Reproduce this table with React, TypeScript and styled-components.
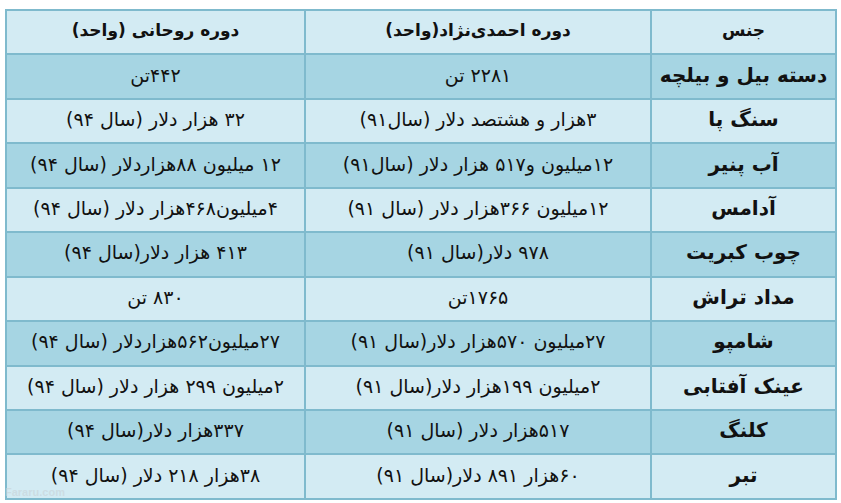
import * as React from 'react'
import styled, { createGlobalStyle } from 'styled-components'

const GlobalStyle = createGlobalStyle`
  html, body {
    margin: 0;
    padding: 0;
    background: #ffffff;
  }
`

interface Row {
  name: string
  ahmadi: string
  rouhani: string
}

const rows: Row[] = [
  { name: 'دسته بیل و بیلچه', ahmadi: '۲۲۸۱ تن', rouhani: '۴۴۲تن' },
  { name: 'سنگ پا', ahmadi: '۳هزار و هشتصد دلار (سال۹۱)', rouhani: '۳۲ هزار دلار (سال ۹۴)' },
  { name: 'آب پنیر', ahmadi: '۱۲میلیون و۵۱۷ هزار دلار (سال۹۱)', rouhani: '۱۲ میلیون ۸۸هزاردلار (سال ۹۴)' },
  { name: 'آدامس', ahmadi: '۱۲میلیون ۳۶۶هزار دلار (سال ۹۱)', rouhani: '۴میلیون۴۶۸هزار دلار (سال ۹۴)' },
  { name: 'چوب کبریت', ahmadi: '۹۷۸ دلار(سال ۹۱)', rouhani: '۴۱۳ هزار دلار(سال ۹۴)' },
  { name: 'مداد تراش', ahmadi: '۱۷۶۵تن', rouhani: '۸۳۰ تن' },
  { name: 'شامپو', ahmadi: '۲۷میلیون ۵۷۰هزار دلار(سال ۹۱)', rouhani: '۲۷میلیون۵۶۲هزاردلار (سال ۹۴)' },
  { name: 'عینک آفتابی', ahmadi: '۲میلیون ۱۹۹هزار دلار(سال ۹۱)', rouhani: '۲میلیون ۲۹۹ هزار دلار (سال ۹۴)' },
  { name: 'کلنگ', ahmadi: '۵۱۷هزار دلار (سال ۹۱)', rouhani: '۳۳۷هزار دلار(سال ۹۴)' },
  { name: 'تبر', ahmadi: '۶۰هزار ۸۹۱ دلار(سال ۹۱)', rouhani: '۳۸هزار ۲۱۸ دلار (سال ۹۴)' }
]

export default function App() {
  return (
    <Page>
      <GlobalStyle />
      <Frame>
        <Table>
          <colgroup>
            <col style={{ width: 185 }} />
            <col style={{ width: 346 }} />
            <col />
          </colgroup>
          <thead>
            <TableRow $dark={false}>
              <HeadCell>جنس</HeadCell>
              <HeadCell>دوره احمدی‌نژاد(واحد)</HeadCell>
              <HeadCell>دوره روحانی (واحد)</HeadCell>
            </TableRow>
          </thead>
          <tbody>
            {rows.map((row, i) => (
              <TableRow key={row.name} $dark={i % 2 === 0}>
                <NameCell>{row.name}</NameCell>
                <Cell>{row.ahmadi}</Cell>
                <Cell>{row.rouhani}</Cell>
              </TableRow>
            ))}
          </tbody>
        </Table>
        <Watermark>Fararu.com</Watermark>
      </Frame>
    </Page>
  )
}

const Page = styled.div`
  width: 841px;
  height: 503px;
  padding: 9px 4px 0 5px;
  box-sizing: border-box;
  background: #ffffff;
`

const Frame = styled.div`
  position: relative;
  width: 832px;
`

const Table = styled.table`
  direction: rtl;
  width: 832px;
  height: 489px;
  border-collapse: collapse;
  table-layout: fixed;
  border: 2px solid #7fbacd;
  font-family: "DejaVu Sans", sans-serif;
  color: #111111;
`

const TableRow = styled.tr<{ $dark: boolean }>`
  height: 44.45px;
  background: ${p => (p.$dark ? '#a6d5e3' : '#d3ebf3')};
`

const Cell = styled.td`
  border: 2px solid #7fbacd;
  text-align: center;
  vertical-align: middle;
  font-size: 19px;
  font-weight: normal;
  padding: 0 4px 4px;
  white-space: nowrap;
`

const NameCell = styled(Cell)`
  font-weight: bold;
  font-size: 20px;
  padding: 0 0 4px;
`

const HeadCell = styled.th`
  border: 2px solid #7fbacd;
  text-align: center;
  vertical-align: middle;
  font-size: 17px;
  font-weight: bold;
  padding: 0 4px 4px;
  white-space: nowrap;
`

const Watermark = styled.div`
  position: absolute;
  left: 0;
  bottom: 2px;
  font-family: "Liberation Sans", sans-serif;
  font-weight: bold;
  font-size: 11px;
  color: rgba(200, 210, 215, 0.6);
`
